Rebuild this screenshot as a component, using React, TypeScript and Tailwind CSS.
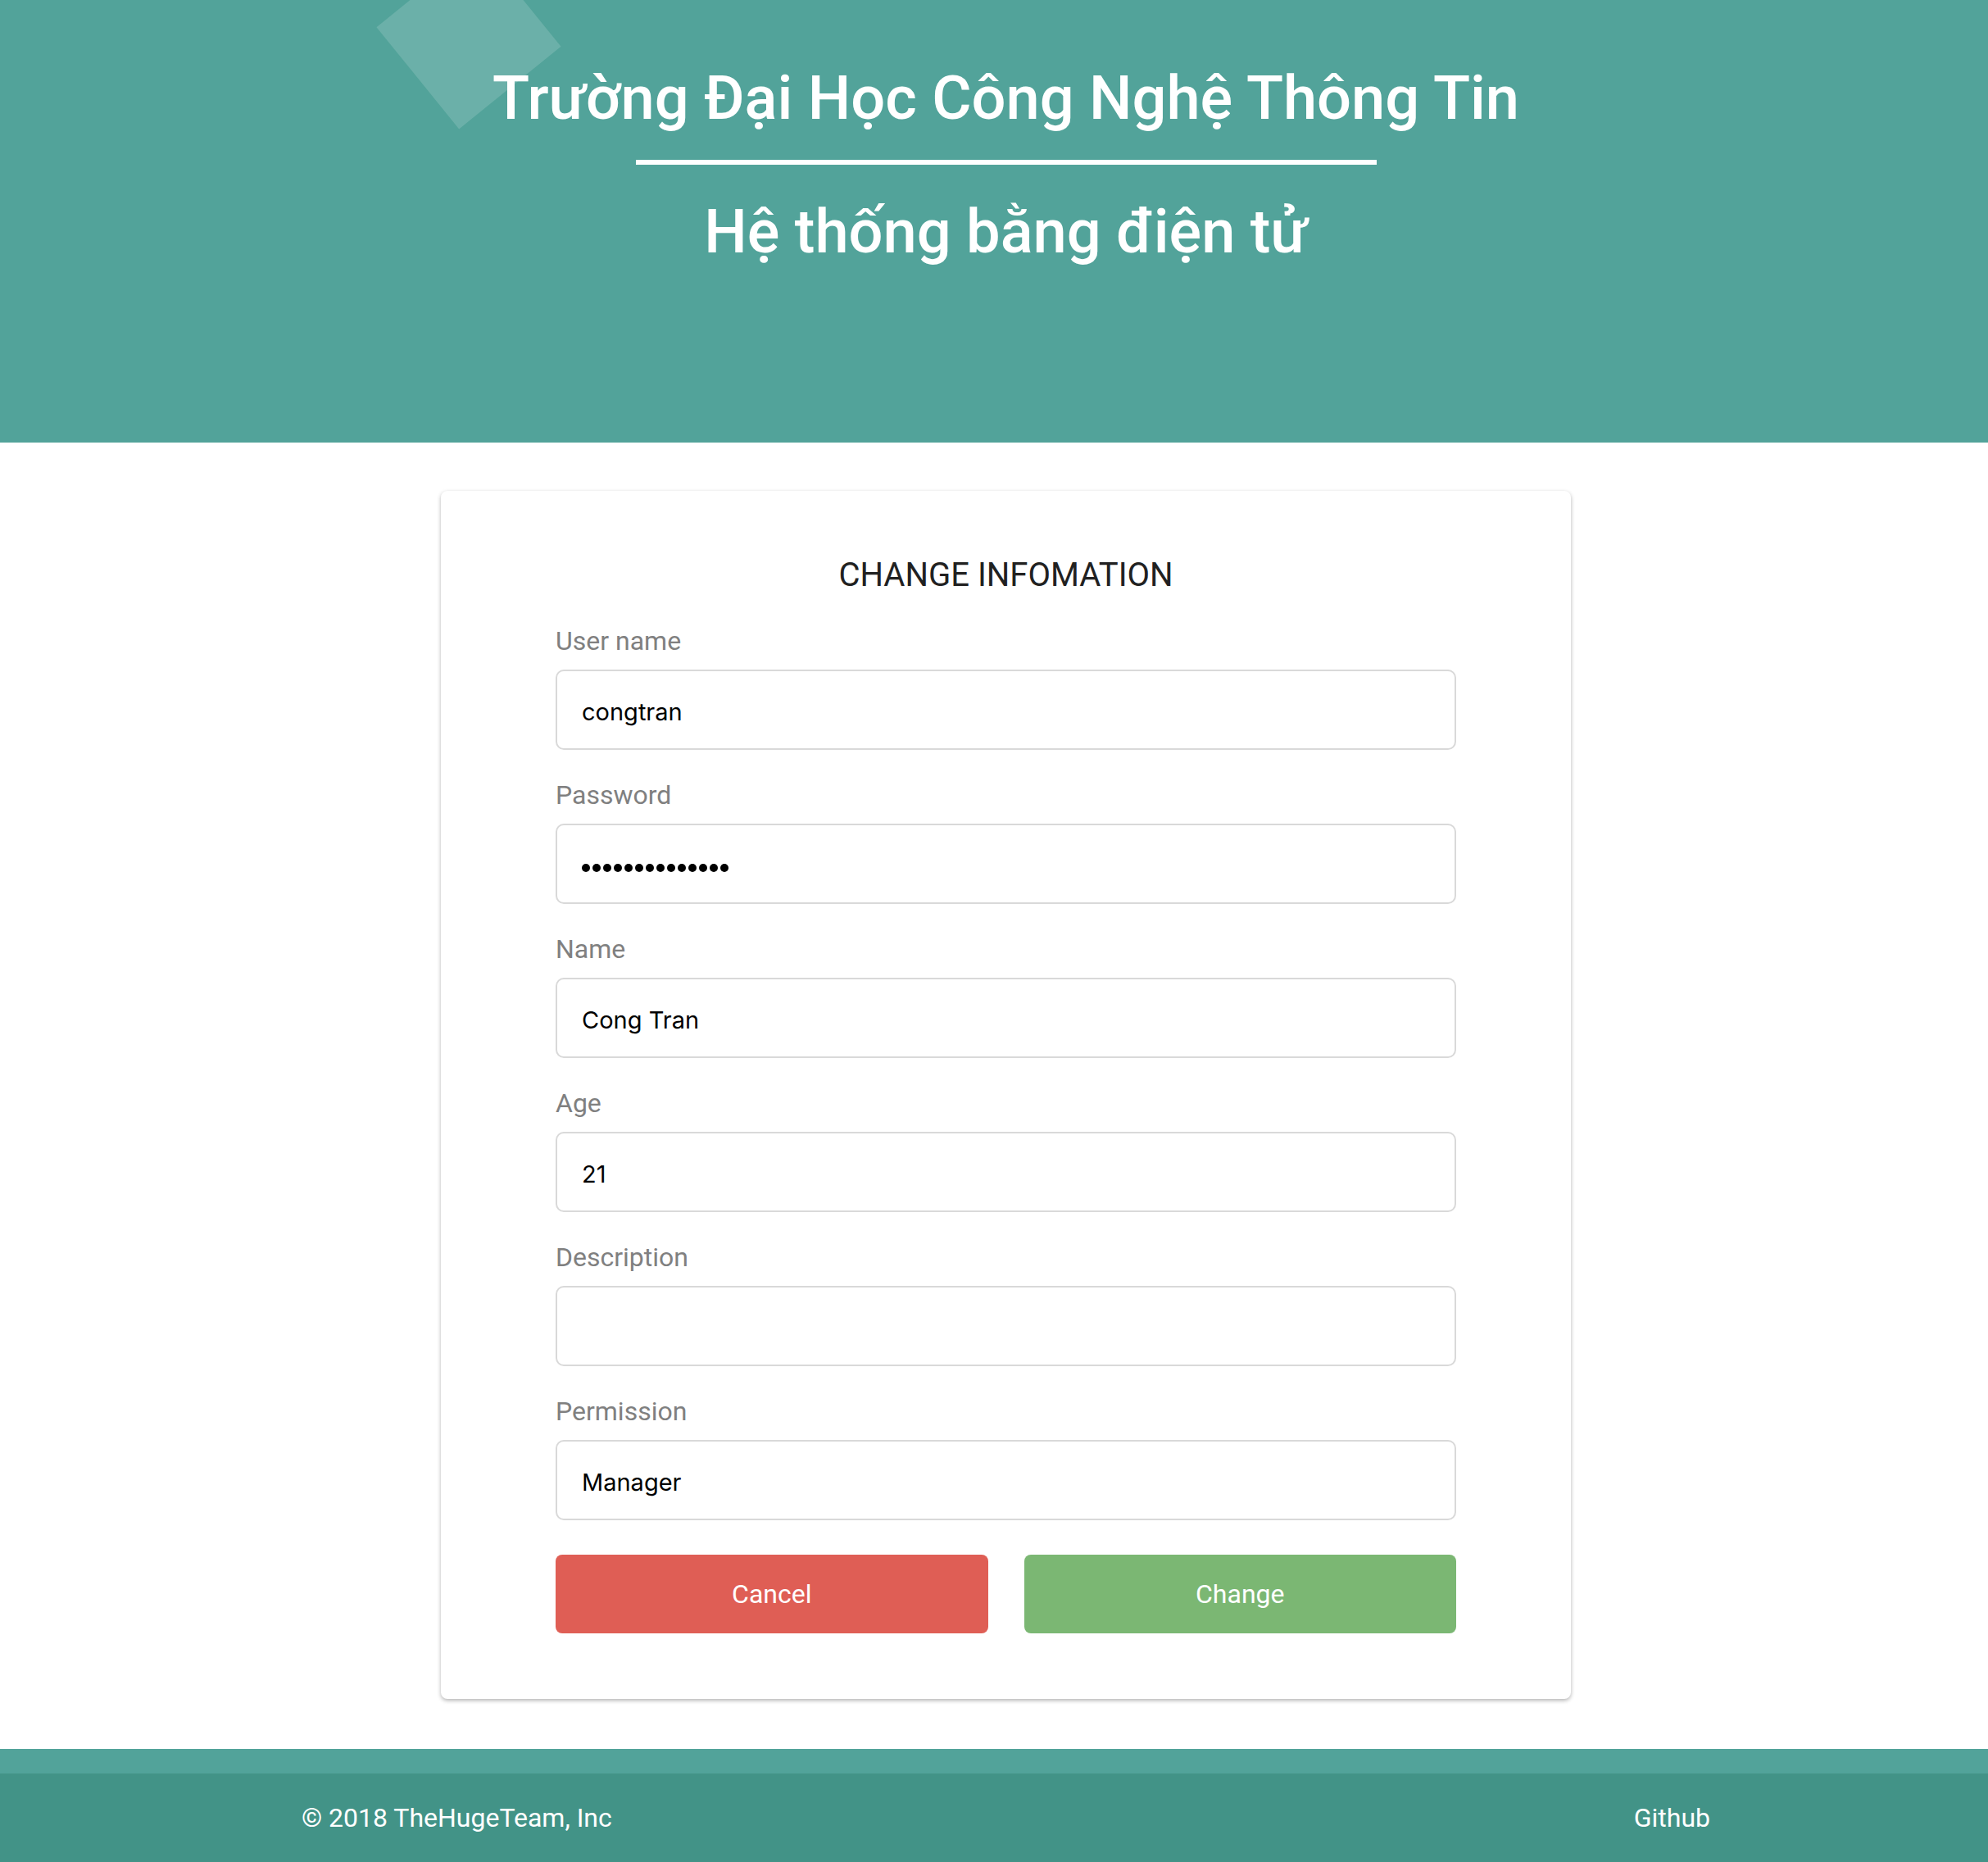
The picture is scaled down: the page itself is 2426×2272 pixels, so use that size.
import React from "react";

const fields = [
  { label: "User name", value: "congtran" },
  { label: "Password", value: "", password: true },
  { label: "Name", value: "Cong Tran" },
  { label: "Age", value: "21" },
  { label: "Description", value: "" },
  { label: "Permission", value: "Manager" },
];

export default function App() {
  return (
    <div className="min-h-[2272px] bg-white font-['Roboto',sans-serif]">
      <header className="relative h-[540px] overflow-hidden bg-[#52a39a] pl-[29px] text-white">
        {/* decorative diamond */}
        <div className="absolute left-[492px] top-[-35px] h-[160px] w-[160px] rotate-[51deg] bg-white/15" />
        <div className="relative flex flex-col items-center pt-[83px]">
          <h1 className="text-[74px] font-medium leading-none">Trường Đại Học Công Nghệ Thông Tin</h1>
          <div className="mt-[38px] h-[6px] w-[904px] bg-white" />
          <h2 className="mt-[45px] text-[74px] font-medium leading-none">Hệ thống bằng điện tử</h2>
        </div>
      </header>

      <main className="pl-[29px] pt-[59px] pb-[61px]">
        <div className="mx-auto w-[1379px] rounded-[8px] bg-white px-[140px] pt-[83px] pb-[80px] shadow-[0_2px_5px_rgba(0,0,0,0.3)]">
          <div className="text-center text-[40px] leading-none text-[#212121]">CHANGE INFOMATION</div>
          <div className="mt-[44px]">
            {fields.map((f, i) => (
              <div key={f.label} className={i === 0 ? "" : "mt-[39px]"}>
                <div className="text-[32px] leading-none text-[#808080]">{f.label}</div>
                <div className="mt-[19px] flex h-[98px] items-center rounded-[10px] border-2 border-[#d9d9d9] bg-white pl-[30px] pt-[6px] font-['Inter',sans-serif] text-[29px] text-black">
                  {f.password ? (
                    <div className="flex gap-[3px] pt-[4px]">
                      {Array.from({ length: 14 }).map((_, j) => (
                        <span key={j} className="h-[10px] w-[10px] rounded-full bg-black" />
                      ))}
                    </div>
                  ) : (
                    f.value
                  )}
                </div>
              </div>
            ))}
          </div>
          <div className="mt-[42px] grid grid-cols-2 gap-[44px]">
            <button className="h-[96px] rounded-[8px] bg-[#df5e55] text-[32px] text-white">Cancel</button>
            <button className="h-[96px] rounded-[8px] bg-[#7bb773] text-[32px] text-white">Change</button>
          </div>
        </div>
      </main>

      <footer>
        <div className="h-[30px] bg-[#52a39a]" />
        <div className="flex h-[108px] items-center bg-[#429387] pl-[29px] text-white">
          <div className="mx-auto flex w-[1719px] items-center justify-between text-[32px]">
            <span>© 2018 TheHugeTeam, Inc</span>
            <span>Github</span>
          </div>
        </div>
      </footer>
    </div>
  );
}
